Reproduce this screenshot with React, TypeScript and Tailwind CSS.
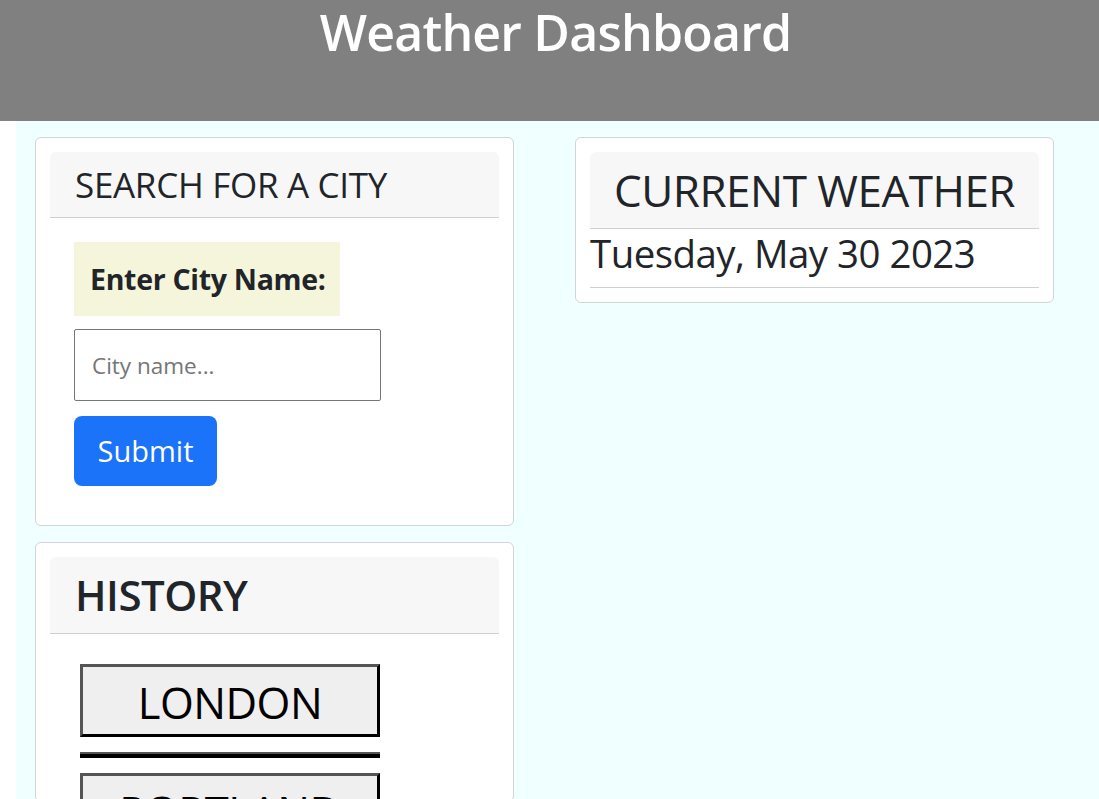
import React from "react";

const font = { fontFamily: '"Open Sans", "Noto Sans", sans-serif' };

export default function App() {
  return (
    <div className="min-h-screen bg-white text-[#212529]" style={font}>
      <header className="h-[121px] bg-[#808080] flex justify-center pl-[12px]">
        <h1 className="text-[50px] font-semibold text-white leading-none pt-[7px] tracking-[-0.8px]">
          Weather Dashboard
        </h1>
      </header>
      <main className="ml-4 bg-[#f0ffff] flex gap-[61px] pl-[19px] pt-4 min-h-[678px]">
        <div className="w-[479px] flex flex-col gap-4">
          <section className="border border-[#d3d3d3] rounded-md bg-white p-[14px]">
            <div className="h-[66px] bg-[#f7f7f7] rounded-t-md border-b border-[#d0d0d0] flex items-center pl-[25px]">
              <h2 className="text-[35px] leading-none tracking-[-0.3px]">SEARCH FOR A CITY</h2>
            </div>
            <div className="pt-[24px] pl-[24px] pb-[25px] flex flex-col items-start">
              <div className="w-[266px] h-[74px] bg-[#f5f5dc] flex items-center pl-4">
                <span className="text-[28.5px] font-bold leading-none tracking-[-0.3px]">Enter City Name:</span>
              </div>
              <input
                className="mt-[13px] w-[307px] h-[72px] border border-[#767676] rounded-[2px] pl-[17px] text-[22.5px] placeholder:text-[#757575] outline-none"
                placeholder="City name..."
              />
              <button className="mt-[15px] w-[143px] h-[70px] bg-[#1a73f8] rounded-lg text-white text-[29px]">
                Submit
              </button>
            </div>
          </section>
          <section className="border border-[#d3d3d3] rounded-md bg-white px-[14px] pt-[14px] pb-0 h-[260px] overflow-hidden">
            <div className="h-[77px] bg-[#f7f7f7] rounded-t-md border-b border-[#d0d0d0] flex items-center pl-[25px]">
              <h2 className="text-[42px] font-semibold leading-none tracking-[-0.5px]">HISTORY</h2>
            </div>
            <div className="pt-[30px] pl-[30px] flex flex-col items-start">
              <button className="w-[300px] h-[73px] bg-[#efefef] border-[3px] border-t-[#555] border-l-[#555] border-b-black border-r-black text-black text-[43.5px] leading-none tracking-[-0.5px] pt-[5px]">
                LONDON
              </button>
              <div className="mt-[15px] w-[300px] h-[6px] border-t-2 border-t-[#555] border-b-[4px] border-b-black" />
              <button className="mt-[15px] w-[300px] h-[73px] bg-[#efefef] border-[3px] border-t-[#555] border-l-[#555] border-b-black border-r-black text-black text-[43.5px] leading-none tracking-[-0.5px] pt-[5px]">
                PORTLAND
              </button>
            </div>
          </section>
        </div>
        <div className="w-[479px]">
          <section className="border border-[#d3d3d3] rounded-md bg-white p-[14px]">
            <div className="h-[77px] bg-[#f7f7f7] rounded-t-md border-b border-[#d0d0d0] flex items-center justify-center">
              <h2 className="text-[44px] leading-none tracking-[-0.5px]">CURRENT WEATHER</h2>
            </div>
            <div className="h-[59px] border-b border-[#d0d0d0] flex items-start pt-[5px]">
              <p className="text-[38.4px] leading-none tracking-[-0.5px]">Tuesday, May 30 2023</p>
            </div>
          </section>
        </div>
      </main>
    </div>
  );
}
